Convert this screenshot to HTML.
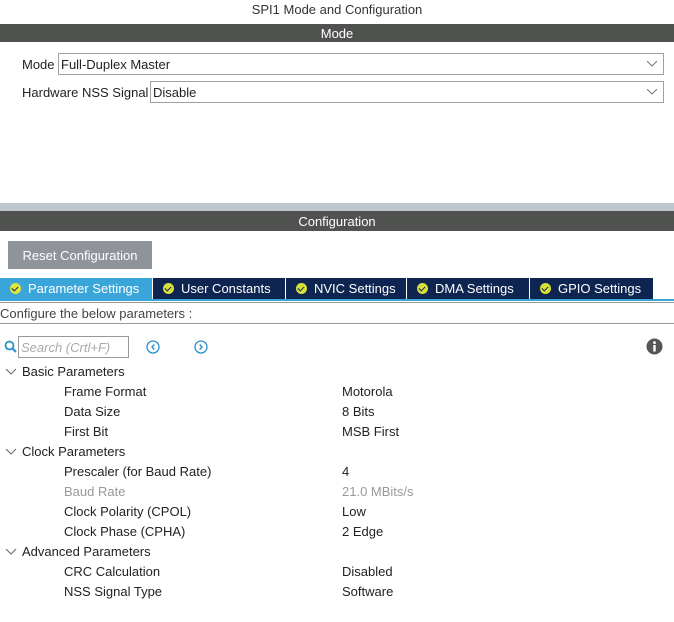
<!DOCTYPE html>
<html><head><meta charset="utf-8"><style>
*{margin:0;padding:0;box-sizing:border-box}
body{width:674px;height:622px;background:#fff;font-family:"Liberation Sans",Arial,sans-serif;font-size:13px;color:#222;position:relative;overflow:hidden}
.a{position:absolute}
.bar{left:0;width:674px;background:#505250;color:#fff;text-align:center;font-size:13px}
.sel{border:1px solid #a0a0a0;height:22px;background:#fff;padding-left:2px;line-height:21px}
.sel svg{position:absolute;right:6px;top:7px}
.tab{top:278px;height:21px;background:#0d2550;color:#fff;line-height:21px;font-size:13px;padding-left:10px;white-space:nowrap}
.tab i{display:inline-block;width:11px;height:11px;border-radius:50%;background:#d8e038;vertical-align:-1px;margin-right:7px;position:relative}
.tab i:after{content:"";position:absolute;left:3px;top:2px;width:3px;height:5px;border:solid #0d2550;border-width:0 1.5px 1.5px 0;transform:rotate(45deg)}
.row{left:0;height:20px;line-height:20px;font-size:13px}
.k{position:absolute;left:64px}
.v{position:absolute;left:342px}
.g{left:22px}
.chev{position:absolute;left:5px;top:6px}
</style></head><body>
<div class="a" style="top:2px;left:0;width:674px;text-align:center;color:#333;line-height:16px">SPI1 Mode and Configuration</div>
<div class="a bar" style="top:24px;height:18px;line-height:19px">Mode</div>
<div class="a" style="top:57px;left:22px">Mode</div>
<div class="a sel" style="top:53px;left:58px;width:606px">Full-Duplex Master<svg width="10" height="6"><path d="M0 0L5 5L10 0" stroke="#777" fill="none"/></svg></div>
<div class="a" style="top:85px;left:22px">Hardware NSS Signal</div>
<div class="a sel" style="top:81px;left:150px;width:514px">Disable<svg width="10" height="6"><path d="M0 0L5 5L10 0" stroke="#777" fill="none"/></svg></div>
<div class="a" style="top:203px;left:0;width:674px;height:8px;background:#bcc6cc"></div>
<div class="a bar" style="top:211px;height:20px;line-height:21px">Configuration</div>
<div class="a" style="top:241px;left:8px;width:144px;height:28px;background:#8e9499;color:#fff;text-align:center;line-height:29px">Reset Configuration</div>
<div class="a tab" style="left:0;width:152px;background:#3aa5d8"><i style="background:#e0e640"></i>Parameter Settings</div>
<div class="a tab" style="left:153px;width:132px"><i></i>User Constants</div>
<div class="a tab" style="left:286px;width:120px"><i></i>NVIC Settings</div>
<div class="a tab" style="left:407px;width:122px"><i></i>DMA Settings</div>
<div class="a tab" style="left:530px;width:123px"><i></i>GPIO Settings</div>
<div class="a" style="top:299px;left:0;width:674px;height:2px;background:#3aa5d8"></div>
<div class="a" style="top:302px;left:0;width:674px;height:1px;background:#999"></div>
<div class="a" style="top:306px;left:0;color:#444;line-height:16px">Configure the below parameters :</div>
<div class="a" style="top:323px;left:0;width:674px;height:1px;background:#999"></div>
<svg class="a" style="top:340px;left:4px" width="14" height="14"><circle cx="5.5" cy="5.5" r="4" stroke="#2a8fd0" stroke-width="1.8" fill="none"/><path d="M8.5 8.5L12 12" stroke="#2a8fd0" stroke-width="2"/></svg>
<div class="a" style="top:336px;left:18px;width:111px;height:22px;border:1px solid #999;color:#aaa;font-style:italic;line-height:21px;padding-left:2px">Search (Crtl+F)</div>
<svg class="a" style="top:340px;left:146px" width="14" height="14"><circle cx="7" cy="7" r="6" stroke="#2a8fd0" stroke-width="1.3" fill="none"/><path d="M8.3 4.5L6 7L8.3 9.5" stroke="#2a8fd0" stroke-width="1.4" fill="none"/></svg>
<svg class="a" style="top:340px;left:194px" width="14" height="14"><circle cx="7" cy="7" r="6" stroke="#2a8fd0" stroke-width="1.3" fill="none"/><path d="M5.7 4.5L8 7L5.7 9.5" stroke="#2a8fd0" stroke-width="1.4" fill="none"/></svg>
<svg class="a" style="top:338px;left:646px" width="17" height="17"><circle cx="8.5" cy="8.5" r="8" fill="#555"/><rect x="7.3" y="7" width="2.4" height="6.5" fill="#fff"/><circle cx="8.5" cy="4.6" r="1.4" fill="#fff"/></svg>

<div class="a row" style="top:362px;width:674px"><svg class="chev" width="12" height="8"><path d="M1 1L6 6L11 1" stroke="#666" fill="none"/></svg><span class="k g">Basic Parameters</span></div>
<div class="a row" style="top:382px;width:674px"><span class="k">Frame Format</span><span class="v">Motorola</span></div>
<div class="a row" style="top:402px;width:674px"><span class="k">Data Size</span><span class="v">8 Bits</span></div>
<div class="a row" style="top:422px;width:674px"><span class="k">First Bit</span><span class="v">MSB First</span></div>
<div class="a row" style="top:442px;width:674px"><svg class="chev" width="12" height="8"><path d="M1 1L6 6L11 1" stroke="#666" fill="none"/></svg><span class="k g">Clock Parameters</span></div>
<div class="a row" style="top:462px;width:674px"><span class="k">Prescaler (for Baud Rate)</span><span class="v">4</span></div>
<div class="a row" style="top:482px;width:674px;color:#999"><span class="k">Baud Rate</span><span class="v">21.0 MBits/s</span></div>
<div class="a row" style="top:502px;width:674px"><span class="k">Clock Polarity (CPOL)</span><span class="v">Low</span></div>
<div class="a row" style="top:522px;width:674px"><span class="k">Clock Phase (CPHA)</span><span class="v">2 Edge</span></div>
<div class="a row" style="top:542px;width:674px"><svg class="chev" width="12" height="8"><path d="M1 1L6 6L11 1" stroke="#666" fill="none"/></svg><span class="k g">Advanced Parameters</span></div>
<div class="a row" style="top:562px;width:674px"><span class="k">CRC Calculation</span><span class="v">Disabled</span></div>
<div class="a row" style="top:582px;width:674px"><span class="k">NSS Signal Type</span><span class="v">Software</span></div>
</body></html>
